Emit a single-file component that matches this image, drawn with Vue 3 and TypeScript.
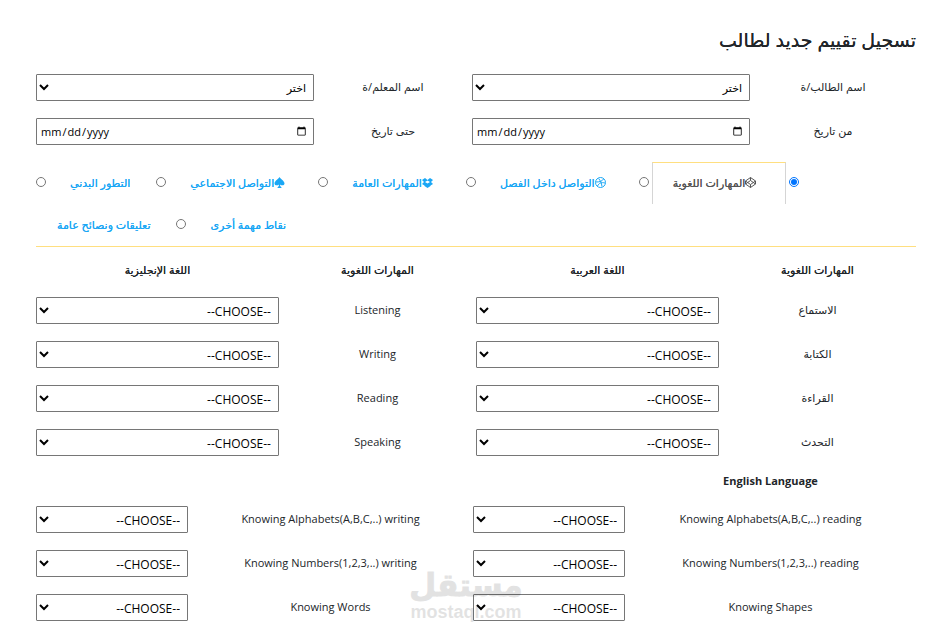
<script setup lang="ts">
import { ref } from 'vue'

type IconName = 'codepen' | 'dribbble' | 'dropbox' | 'spade'
interface Tab { id: string; label: string; icon?: IconName }

const tabRows: Tab[][] = [
  [
    { id: 'language', label: 'المهارات اللغوية', icon: 'codepen' },
    { id: 'class', label: 'التواصل داخل الفصل', icon: 'dribbble' },
    { id: 'general', label: 'المهارات العامة', icon: 'dropbox' },
    { id: 'social', label: 'التواصل الاجتماعي', icon: 'spade' },
    { id: 'physical', label: 'التطور البدني' },
  ],
  [
    { id: 'points', label: 'نقاط مهمة أخرى' },
    { id: 'notes', label: 'تعليقات ونصائح عامة' },
  ],
]
const active = ref('language')

const skills = [
  { ar: 'الاستماع', en: 'Listening' },
  { ar: 'الكتابة', en: 'Writing' },
  { ar: 'القراءة', en: 'Reading' },
  { ar: 'التحدث', en: 'Speaking' },
]
const english = [
  'Knowing Alphabets(A,B,C,..) reading',
  'Knowing Alphabets(A,B,C,..) writing',
  'Knowing Numbers(1,2,3,..) reading',
  'Knowing Numbers(1,2,3,..) writing',
  'Knowing Shapes',
  'Knowing Words',
]
</script>

<template>
  <main class="page" dir="rtl" lang="ar">
    <h1>تسجيل تقييم جديد لطالب</h1>

    <form class="filters" @submit.prevent>
      <label for="student">اسم الطالب/ة</label>
      <select id="student" class="control"><option>اختر</option></select>
      <label for="teacher">اسم المعلم/ة</label>
      <select id="teacher" class="control"><option>اختر</option></select>
      <label for="from">من تاريخ</label>
      <input id="from" class="control date" type="date" dir="ltr" lang="en" />
      <label for="until">حتى تاريخ</label>
      <input id="until" class="control date" type="date" dir="ltr" lang="en" />
    </form>

    <div class="tabs">
      <div v-for="(row, r) in tabRows" :key="r" class="tab-row">
        <template v-for="tab in row" :key="tab.id">
          <input v-if="tab.id !== 'points'" :id="tab.id" v-model="active" class="radio" type="radio" name="tab" :value="tab.id" />
          <label :for="tab.id" class="tab" :class="{ active: active === tab.id }">
            <svg v-if="tab.icon" class="icon" viewBox="0 0 22 22" aria-hidden="true">
              <g v-if="tab.icon === 'codepen'" fill="none" stroke="currentColor" stroke-width="2" stroke-linejoin="round">
                <path d="M11 1 21 8v6l-10 7-10-7V8zM11 1v6M11 15v6M1 8l10 7 10-7M1 14l10-7 10 7" />
              </g>
              <g v-else-if="tab.icon === 'dribbble'" fill="none" stroke="currentColor" stroke-width="2">
                <circle cx="11" cy="11" r="10" />
                <path d="M7 3c4 4 6 9 7 16M2 10c7 0 12-1 15-6M5 18c3-6 8-8 15-6" />
              </g>
              <path v-else-if="tab.icon === 'dropbox'" fill="currentColor" d="M6 2l5 4 5-4 6 4-4 4 4 4-5 3v1l-6 4-6-4v-1l-5-3 4-4-4-4zM11 7 6 10l5 3 5-3z" fill-rule="evenodd" />
              <path v-else fill="currentColor" d="M11 0c2 4 10 8 10 13 0 4-6 5-9 2 0 3 1 4 3 6v1H7v-1c2-2 3-3 3-6-3 3-9 2-9-2C1 8 9 4 11 0z" />
            </svg>{{ tab.label }}
          </label>
        </template>
        <input v-if="r === 0" id="points" v-model="active" class="radio" type="radio" name="tab" value="points" />
      </div>
    </div>

    <table class="skills">
      <colgroup><col class="name" /><col class="pick" /><col class="name" /><col class="pick" /></colgroup>
      <thead>
        <tr><th>المهارات اللغوية</th><th>اللغة العربية</th><th>المهارات اللغوية</th><th>اللغة الإنجليزية</th></tr>
      </thead>
      <tbody>
        <tr v-for="s in skills" :key="s.en">
          <td><label :for="'ar-' + s.en">{{ s.ar }}</label></td>
          <td><select :id="'ar-' + s.en" class="control latin"><option>--CHOOSE--</option></select></td>
          <td><label :for="'en-' + s.en">{{ s.en }}</label></td>
          <td><select :id="'en-' + s.en" class="control latin"><option>--CHOOSE--</option></select></td>
        </tr>
      </tbody>
    </table>

    <section class="english">
      <h2>English Language</h2>
      <template v-for="(item, i) in english" :key="item">
        <label :for="'item-' + i"><bdi>{{ item }}</bdi></label>
        <select :id="'item-' + i" class="control latin"><option>--CHOOSE--</option></select>
      </template>
    </section>

    <div class="watermark" aria-hidden="true">
      <span class="mark-ar">مستقل</span>
      <span class="mark-en" dir="ltr">mostaql.com</span>
    </div>
  </main>
</template>

<style>
body { background: #fff; }
</style>

<style scoped>
.page {
  position: relative;
  box-sizing: border-box;
  padding: 24px 16px 13px 36px;
  color: #212529;
  font: 11px/16px "Open Sans", "DejaVu Sans", sans-serif;
}
h1 { margin: 0; font-size: 19px; line-height: 32px; font-weight: 400; text-shadow: 0 0 0 currentColor; }
.filters {
  display: grid;
  grid-template-columns: 166fr 278fr 158fr 278fr;
  row-gap: 17px;
  padding-top: 18px;
  align-items: center;
  text-align: center;
}
.filters label, .skills label, .english label { display: block; padding-bottom: 2px; }
.control {
  box-sizing: border-box;
  display: block;
  width: 100%;
  height: 27px;
  margin: 0;
  padding: 1px 3px;
  border: 1px solid #767676;
  border-radius: 1px;
  background-color: #fff;
  color: #000;
  font: inherit;
}
.latin { padding-top: 2px; font-size: 12px; }
.date { padding-right: 4px; }
.tabs { padding-top: 17px; border-bottom: 1px solid #ffdf80; }
.tab-row { display: flex; justify-content: flex-end; }
.radio { width: 10px; height: 10px; margin: 15px 0 0; flex: none; }
.tab {
  display: flex;
  align-items: center;
  box-sizing: border-box;
  height: 42px;
  margin: 0 3px;
  padding: 0 22px 2px 20px;
  border: 1px solid transparent;
  border-bottom: 0;
  color: #1aa7f5;
  text-shadow: 0 0 0 currentColor;
  white-space: nowrap;
}
.tab:last-child { margin-left: 0; }
.tab.active { border-color: #ffdf80 #d5d5d5; color: #555; }
.icon { width: 11px; height: 11px; margin-right: 7px; }
.skills { width: 100%; table-layout: fixed; border-collapse: collapse; text-align: center; }
.name { width: 22.4%; }
.pick { width: 27.6%; }
th { height: 41px; padding: 4px 0 0; font-weight: 400; text-shadow: 0 0 0 currentColor; box-sizing: border-box; }
.skills td { height: 44px; box-sizing: border-box; padding: 9px 0 8px; vertical-align: middle; }
.english {
  display: grid;
  grid-template-columns: 291fr 152fr 285fr 152fr;
  row-gap: 17px;
  align-items: center;
  text-align: center;
}
h2 { grid-column: 1; margin: 0; padding-top: 9px; font-size: 11px; line-height: 16px; }
h2 + label { grid-column: 1; }
.watermark {
  position: absolute;
  bottom: 14px;
  left: 50%;
  transform: translateX(-50%);
  display: flex;
  flex-direction: column;
  align-items: center;
  color: #000;
  opacity: 0.11;
  font-weight: 700;
  pointer-events: none;
}
.mark-ar { font-size: 31px; line-height: 40px; -webkit-text-stroke: 1px #000; }
.mark-en { font-family: "Liberation Sans", sans-serif; font-size: 18px; line-height: 16px; }
</style>
